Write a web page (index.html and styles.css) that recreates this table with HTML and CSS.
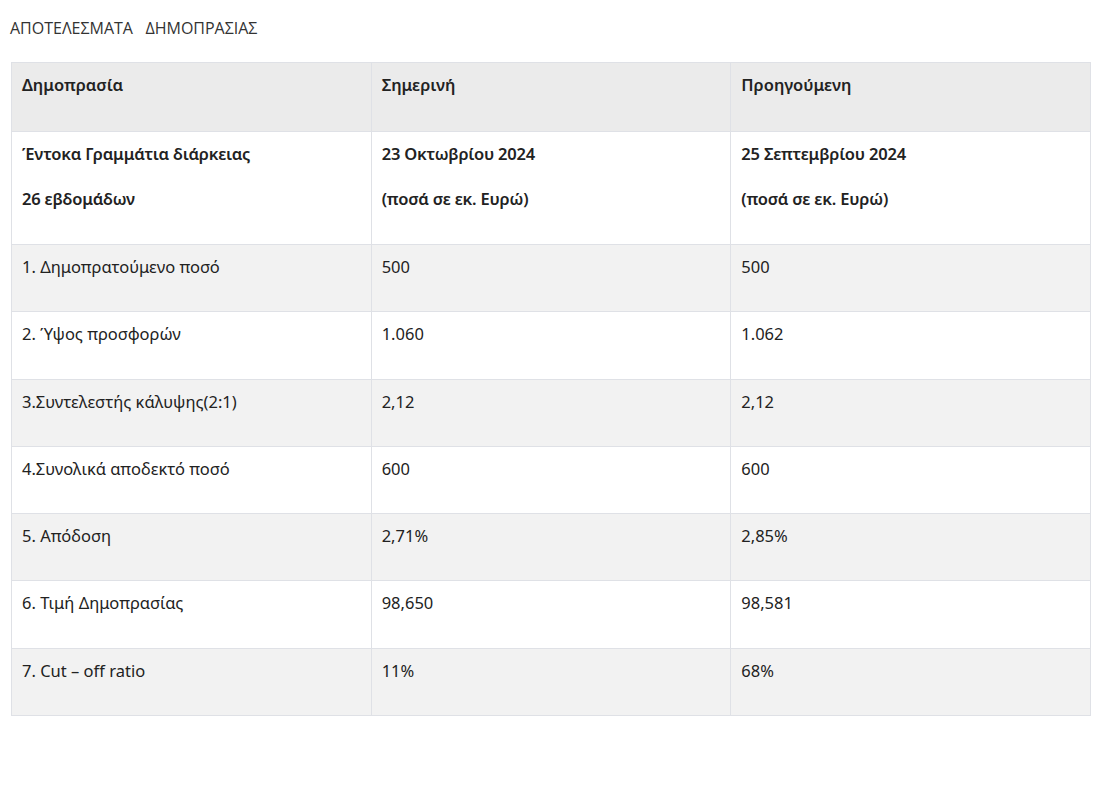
FILE: index.html
```html
<!DOCTYPE html>
<html lang="el">
<head>
<meta charset="utf-8">
<link rel="stylesheet" href="styles.css">
</head>
<body>
<p class="title">ΑΠΟΤΕΛΕΣΜΑΤΑ &nbsp; ΔΗΜΟΠΡΑΣΙΑΣ</p>
<table class="results">
  <colgroup><col class="c"><col class="c"><col class="c"></colgroup>
  <thead>
    <tr class="head">
      <th><p>Δημοπρασία</p></th>
      <th><p>Σημερινή</p></th>
      <th><p>Προηγούμενη</p></th>
    </tr>
  </thead>
  <tbody>
    <tr class="white bold">
      <td><p>Έντοκα Γραμμάτια διάρκειας</p><p>26 εβδομάδων</p></td>
      <td><p>23 Οκτωβρίου 2024</p><p>(ποσά σε εκ. Ευρώ)</p></td>
      <td><p>25 Σεπτεμβρίου 2024</p><p>(ποσά σε εκ. Ευρώ)</p></td>
    </tr>
    <tr class="grey">
      <td><p>1. Δημοπρατούμενο ποσό</p></td><td><p>500</p></td><td><p>500</p></td>
    </tr>
    <tr class="white">
      <td><p>2. Ύψος προσφορών</p></td><td><p>1.060</p></td><td><p>1.062</p></td>
    </tr>
    <tr class="grey">
      <td><p>3.Συντελεστής κάλυψης(2:1)</p></td><td><p>2,12</p></td><td><p>2,12</p></td>
    </tr>
    <tr class="white">
      <td><p>4.Συνολικά αποδεκτό ποσό</p></td><td><p>600</p></td><td><p>600</p></td>
    </tr>
    <tr class="grey">
      <td><p>5. Απόδοση</p></td><td><p>2,71%</p></td><td><p>2,85%</p></td>
    </tr>
    <tr class="white">
      <td><p>6. Τιμή Δημοπρασίας</p></td><td><p>98,650</p></td><td><p>98,581</p></td>
    </tr>
    <tr class="grey">
      <td><p>7. Cut – off ratio</p></td><td><p>11%</p></td><td><p>68%</p></td>
    </tr>
  </tbody>
</table>
</body>
</html>
```
FILE: styles.css
```css
html, body {
  margin: 0;
  padding: 0;
  background: #ffffff;
}
body {
  padding: 18px 11px 0 11px;
  font-family: "Noto Sans", "Open Sans", sans-serif;
  color: #222222;
}
.title {
  margin: 0 0 24px -1px;
  font-family: "Open Sans", "Noto Sans", sans-serif;
  font-size: 16px;
  line-height: 20px;
  color: #333333;
}
.results {
  width: 1080px;
  border-collapse: collapse;
  table-layout: fixed;
  font-size: 16.5px;
}
.results .c {
  width: 33.333%;
}
.results th,
.results td {
  border: 1px solid #dfe1e6;
  padding: 11px 10px 10px 10px;
  vertical-align: top;
  text-align: left;
}
.results p {
  margin: 0 0 23px 0;
  line-height: 22.3px;
}
.head th {
  background: #ebebeb;
  font-weight: 600;
  padding-bottom: 11.7px;
}
.bold td {
  font-weight: 600;
  letter-spacing: -0.2px;
  padding-bottom: 10.4px;
}
.grey td {
  background: #f2f2f2;
}
.white td {
  background: #ffffff;
}
```
